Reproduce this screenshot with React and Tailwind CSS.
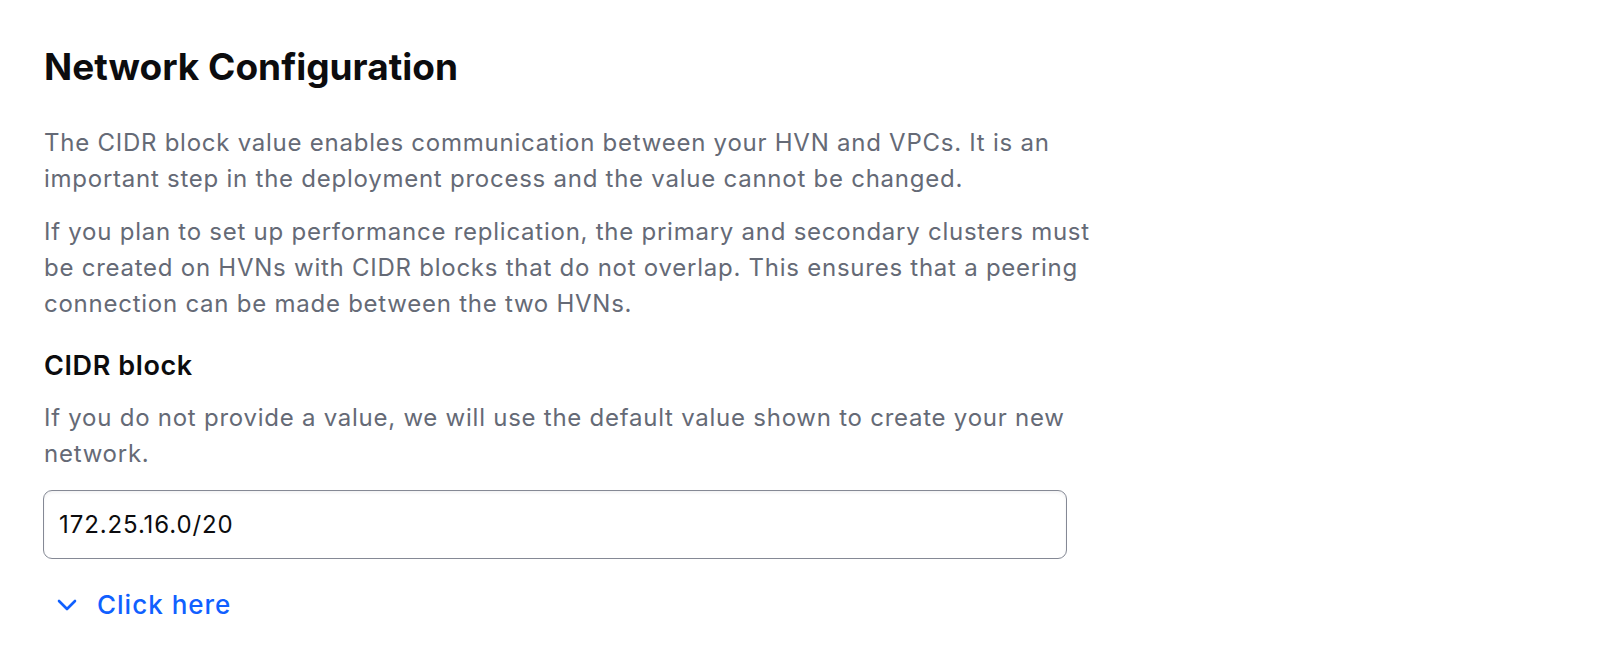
import React from "react";

function ChevronDown() {
  return (
    <svg width="20" height="12" viewBox="0 0 20 12" fill="none" aria-hidden="true">
      <path d="M2 2l8 8 8-8" stroke="currentColor" strokeWidth="2.6" strokeLinecap="round" strokeLinejoin="round" />
    </svg>
  );
}

export default function App() {
  return (
    <div className="min-h-screen bg-white pl-[44px] pt-[46px] font-['Inter',sans-serif] antialiased">
      <div className="w-[1064px]">
        <h1 className="text-[37px] leading-[42px] font-bold text-[#0c0c0e]">
          Network Configuration
        </h1>

        {/* Intro copy */}
        <p className="mt-[37px] text-[24px] leading-[36px] tracking-[0.75px] text-[#656a76]">
          The CIDR block value enables communication between your HVN and VPCs. It is an
          important step in the deployment process and the value cannot be changed.
        </p>
        <p className="mt-[17px] text-[24px] leading-[36px] tracking-[0.75px] text-[#656a76]">
          If you plan to set up performance replication, the primary and secondary clusters must
          be created on HVNs with CIDR blocks that do not overlap. This ensures that a peering
          connection can be made between the two HVNs.
        </p>

        {/* CIDR field */}
        <label htmlFor="cidr" className="mt-[26px] block text-[27px] leading-[36px] font-semibold tracking-[0.6px] text-[#0c0c0e]">
          CIDR block
        </label>
        <p className="mt-[16px] text-[24px] leading-[36px] tracking-[0.75px] text-[#656a76]">
          If you do not provide a value, we will use the default value shown to create your new
          network.
        </p>
        <input
          id="cidr"
          type="text"
          defaultValue="172.25.16.0/20"
          className="mt-[18px] -ml-[1px] block h-[69px] w-[1024px] rounded-[9px] border-[1.5px] border-[#858995] bg-white px-[15px] text-[24px] tracking-[0.9px] text-[#0c0c0e] shadow-[inset_0_2px_3px_rgba(97,104,117,0.08)] outline-none"
        />

        <button type="button" className="mt-[28px] flex items-center gap-[20px] pl-[13px] text-[#1060ff]">
          <ChevronDown />
          <span className="text-[26px] leading-[36px] font-medium tracking-[1px]">Click here</span>
        </button>
      </div>
    </div>
  );
}
